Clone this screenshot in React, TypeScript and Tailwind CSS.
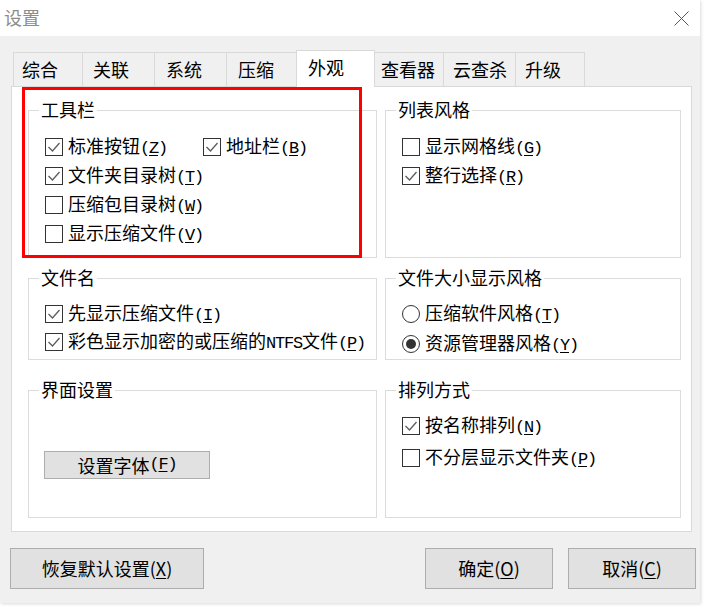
import React from "react"

const CJK = "font-['Noto_Sans_CJK_SC','Noto_Sans',sans-serif]"
const MONO = "font-['Liberation_Mono','DejaVu_Sans_Mono',monospace]"

// ascii runs look half-width (old SimSun style), so render them in a mono font
function Txt({ s }: { s: string }) {
  const runs = s.match(/[\x00-\x7f]+|[^\x00-\x7f]+/g) ?? []
  return (
    <>
      {runs.map((r, i) => {
        if (!/^[\x00-\x7f]/.test(r)) return <span key={i}>{r}</span>
        const parts = r.split("&")
        return (
          <span key={i} className={`${MONO} text-[17px] tracking-[-1.2px]`}>
            {parts.map((p, j) =>
              j === 0 ? (
                <span key={j}>{p}</span>
              ) : (
                <span key={j}>
                  <span className="underline underline-offset-2">{p[0]}</span>
                  {p.slice(1)}
                </span>
              )
            )}
          </span>
        )
      })}
    </>
  )
}

function Check({ checked }: { checked?: boolean }) {
  return (
    <span className="w-[18px] h-[18px] border border-[#333] bg-white flex items-center justify-center shrink-0">
      {checked && (
        <svg width="16" height="16" viewBox="0 0 16 16">
          <path d="M2.5 8 L6.5 12 L13.5 4" stroke="#5c5c5c" strokeWidth="1.3" fill="none" />
        </svg>
      )}
    </span>
  )
}

function Radio({ checked }: { checked?: boolean }) {
  return (
    <span className="w-[18px] h-[18px] rounded-full border border-[#333] bg-white flex items-center justify-center shrink-0">
      {checked && <span className="w-[10px] h-[10px] rounded-full bg-[#333]" />}
    </span>
  )
}

function Item({ label, checked, radio, className = "" }: { label: string; checked?: boolean; radio?: boolean; className?: string }) {
  return (
    <div className={`flex items-center gap-[5px] leading-[20px] ${className}`}>
      {radio ? <Radio checked={checked} /> : <Check checked={checked} />}
      <span className="whitespace-nowrap">
        <Txt s={label} />
      </span>
    </div>
  )
}

function Group({ title, className = "", children }: { title: string; className?: string; children?: React.ReactNode }) {
  return (
    <div className={`relative border border-[#dcdcdc] ${className}`}>
      <span className="absolute -top-[12px] left-[10px] bg-white px-[2px] leading-[20px]">{title}</span>
      {children}
    </div>
  )
}

const tabs = [
  { name: "综合", cls: "w-[70px] pl-[8px]" },
  { name: "关联", cls: "w-[73px] pl-[10px] -ml-px" },
  { name: "系统", cls: "w-[73px] pl-[11px] -ml-px" },
  { name: "压缩", cls: "w-[71px] pl-[11px] -ml-px" },
  { name: "外观", cls: "w-[79px] pl-[11px] -ml-px", active: true },
  { name: "查看器", cls: "w-[70px] pl-[6px] -ml-px" },
  { name: "云查杀", cls: "w-[73px] pl-[9px] -ml-px" },
  { name: "升级", cls: "w-[70px] pl-[9px] -ml-px" },
]

function Btn({ children, className = "" }: { children: React.ReactNode; className?: string }) {
  return (
    <div className={`bg-[#e1e1e1] border border-[#adadad] flex items-center justify-center text-[18px] ${className}`}>
      {children}
    </div>
  )
}

export default function App() {
  return (
    <div className={`relative w-[708px] h-[611px] bg-white overflow-hidden text-[18px] text-black ${CJK}`}>
      <div className="w-[700px] h-[603px] bg-[#f0f0f0] flex flex-col shadow-[1px_1px_3px_rgba(0,0,0,0.15)]">
        {/* title bar */}
        <div className="h-[36px] bg-white flex items-center justify-between pl-[4px] pr-[11px] shrink-0">
          <span className="text-[#8c8c8c] leading-[20px] -mt-[2px]">设置</span>
          <svg width="15" height="15" viewBox="0 0 15 15">
            <path d="M0.5 0.5 L14.5 14.5 M14.5 0.5 L0.5 14.5" stroke="#555" strokeWidth="1" />
          </svg>
        </div>

        {/* tabs */}
        <div className="flex items-end h-[36px] mt-[14px] ml-[13px]">
          {tabs.map((t) =>
            t.active ? (
              <div
                key={t.name}
                className={`relative z-10 h-[37px] -mb-px bg-white border border-b-0 border-[#d9d9d9] flex items-center leading-[20px] pb-[4px] ${t.cls}`}
              >
                {t.name}
              </div>
            ) : (
              <div
                key={t.name}
                className={`h-[34px] bg-[#f0f0f0] border border-b-0 border-[#d9d9d9] flex items-center leading-[20px] pb-[2px] ${t.cls}`}
              >
                {t.name}
              </div>
            )
          )}
        </div>

        {/* panel */}
        <div className="ml-[11px] w-[681px] h-[446px] bg-white border border-[#d9d9d9] pl-[16px] pt-[23px] flex flex-col">
          <div className="flex gap-[8px]">
            <Group title="工具栏" className="w-[349px] h-[148px] pl-[16px] pt-[21px]">
              <div className="flex h-[29px]">
                <Item label="标准按钮(&Z)" checked className="w-[158px]" />
                <Item label="地址栏(&B)" checked />
              </div>
              <Item label="文件夹目录树(&T)" checked className="h-[29px]" />
              <Item label="压缩包目录树(&W)" className="h-[29px]" />
              <Item label="显示压缩文件(&V)" className="h-[29px]" />
            </Group>
            <Group title="列表风格" className="w-[296px] h-[148px] pl-[16px] pt-[21px]">
              <Item label="显示网格线(&G)" className="h-[29px]" />
              <Item label="整行选择(&R)" checked className="h-[29px]" />
            </Group>
          </div>

          <div className="flex gap-[8px] mt-[20px]">
            <Group title="文件名" className="w-[349px] h-[82px] pl-[16px] pt-[21px]">
              <Item label="先显示压缩文件(&I)" checked className="h-[28px]" />
              <Item label="彩色显示加密的或压缩的NTFS文件(&P)" checked className="h-[28px]" />
            </Group>
            <Group title="文件大小显示风格" className="w-[296px] h-[82px] pl-[16px] pt-[20px]">
              <Item label="压缩软件风格(&T)" radio className="h-[30px]" />
              <Item label="资源管理器风格(&Y)" radio checked className="h-[30px]" />
            </Group>
          </div>

          <div className="flex gap-[8px] mt-[30px]">
            <Group title="界面设置" className="w-[349px] h-[128px] pl-[15px] pt-[60px]">
              <Btn className="w-[166px] h-[28px] leading-[20px]">
                <Txt s="设置字体(&F)" />
              </Btn>
            </Group>
            <Group title="排列方式" className="w-[296px] h-[128px] pl-[16px] pt-[19px]">
              <Item label="按名称排列(&N)" checked className="h-[32px]" />
              <Item label="不分层显示文件夹(&P)" className="h-[32px]" />
            </Group>
          </div>
        </div>

        {/* bottom buttons */}
        <div className="flex justify-between items-center mt-[16px] pl-[10px] pr-[4px]">
          <Btn className="w-[194px] h-[41px]">
            恢复默认设置(<span className="underline underline-offset-2">X</span>)
          </Btn>
          <div className="flex gap-[15px]">
            <Btn className="w-[128px] h-[41px]">
              确定(<span className="underline underline-offset-2">O</span>)
            </Btn>
            <Btn className="w-[128px] h-[41px]">
              取消(<span className="underline underline-offset-2">C</span>)
            </Btn>
          </div>
        </div>
      </div>

      {/* red annotation frame */}
      <div className="absolute left-[22px] top-[87px] w-[340px] h-[171px] border-[3px] border-[#ff0000] pointer-events-none" />
    </div>
  )
}
